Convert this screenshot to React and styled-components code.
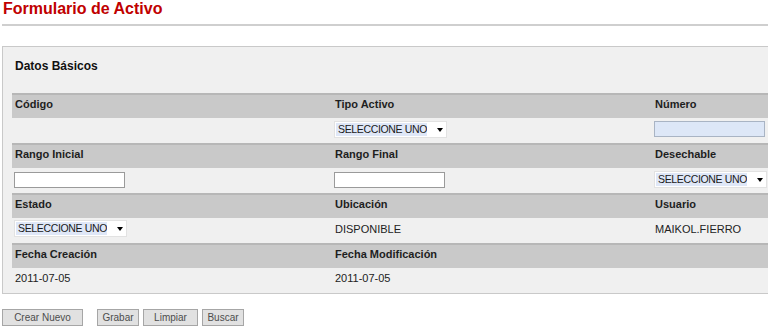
import React from 'react';
import styled, { createGlobalStyle } from 'styled-components';

const GlobalStyle = createGlobalStyle`
    html, body {
        margin: 0;
        padding: 0;
        background: #ffffff;
        overflow: hidden;
    }
    body {
        font-family: "Liberation Sans", Arial, sans-serif;
        color: #222;
    }
`;

const Page = styled.div`
    padding: 0 0 0 2px;
    overflow: hidden;
`;

const Title = styled.h1`
    margin: 0;
    padding-left: 1px;
    font-size: 16px;
    line-height: 18px;
    font-weight: bold;
    color: #c00000;
`;

const Rule = styled.div`
    margin-top: 6px;
    height: 2px;
    background: #cfcfcf;
`;

// panel runs off the right edge of the window, so no right border
const Panel = styled.section`
    margin-top: 20px;
    background: #f0f0f0;
    border: 1px solid #c9c9c9;
    border-right: none;
    padding: 0 0 0 9px;
`;

const SectionTitle = styled.h2`
    margin: 0;
    height: 46px;
    padding: 12px 0 0 3px;
    box-sizing: border-box;
    font-size: 12px;
    line-height: 14px;
    font-weight: bold;
    color: #111;
`;

const Grid = styled.div`
    display: grid;
    grid-template-columns: 320px 320px 1fr;
`;

const HeadCell = styled.div`
    height: 25px;
    box-sizing: border-box;
    background: #c9c9c9;
    border-top: 2px solid #b7b7b7;
    padding: 3px 3px 0;
    font-size: 11px;
    line-height: 13px;
    font-weight: bold;
    color: #1e1e1e;
    white-space: nowrap;
`;

const DataCell = styled.div`
    height: 25px;
    box-sizing: border-box;
    padding: ${p => p.$pad ?? 3}px 2px 0;
    font-size: 11px;
    line-height: 13px;
    color: #222;
`;

const Value = styled.span`
    display: block;
    padding: 0 1px;
    white-space: nowrap;
`;

const TextBox = styled.div`
    width: 111px;
    height: 16px;
    box-sizing: border-box;
    border: 1px solid ${p => (p.$tinted ? '#a9b4c4' : '#9a9a9a')};
    background: ${p => (p.$tinted ? '#dde7f7' : '#ffffff')};
`;

const SelectBox = styled.div`
    width: 113px;
    height: 17px;
    box-sizing: border-box;
    border: 1px solid #e2e2e2;
    background: #ffffff;
    display: flex;
    align-items: center;
    padding: 0 3px 0 1px;
`;

const SelectText = styled.span`
    width: 91px;
    box-sizing: border-box;
    background: #dfe7f7;
    padding: 0 2px;
    font-size: 10.5px;
    line-height: 13px;
    letter-spacing: -0.35px;
    white-space: nowrap;
    overflow: hidden;
    color: #1a1a1a;
    margin-right: 10px;
`;

const Caret = styled.span`
    width: 0;
    height: 0;
    border-left: 3.5px solid transparent;
    border-right: 3.5px solid transparent;
    border-top: 4px solid #000;
`;

const Actions = styled.div`
    margin-top: 15px;
    display: flex;
    align-items: center;
`;

const Button = styled.button`
    width: ${p => p.$w}px;
    height: 17px;
    margin-right: ${p => p.$gap ?? 4}px;
    padding: 0;
    box-sizing: border-box;
    background: #e1e1e1;
    border: 1px solid #a6a6a6;
    border-radius: 0;
    font-family: "Liberation Sans", Arial, sans-serif;
    font-size: 10px;
    line-height: 13px;
    color: #4d4d4d;
`;

const Select = () => (
    <SelectBox>
        <SelectText>SELECCIONE UNO</SelectText>
        <Caret />
    </SelectBox>
);

const App = () => (
    <>
        <GlobalStyle />
        <Page>
            <Title>Formulario de Activo</Title>
            <Rule />
            <Panel>
                <SectionTitle>Datos Básicos</SectionTitle>
                <Grid>
                    <HeadCell>Código</HeadCell>
                    <HeadCell>Tipo Activo</HeadCell>
                    <HeadCell>Número</HeadCell>
                    <DataCell />
                    <DataCell><Select /></DataCell>
                    <DataCell><TextBox $tinted /></DataCell>

                    <HeadCell>Rango Inicial</HeadCell>
                    <HeadCell>Rango Final</HeadCell>
                    <HeadCell>Desechable</HeadCell>
                    <DataCell $pad={4}><TextBox /></DataCell>
                    <DataCell $pad={4}><TextBox /></DataCell>
                    <DataCell><Select /></DataCell>

                    <HeadCell>Estado</HeadCell>
                    <HeadCell>Ubicación</HeadCell>
                    <HeadCell>Usuario</HeadCell>
                    <DataCell $pad={2}><Select /></DataCell>
                    <DataCell $pad={5}><Value>DISPONIBLE</Value></DataCell>
                    <DataCell $pad={5}><Value>MAIKOL.FIERRO</Value></DataCell>

                    <HeadCell>Fecha Creación</HeadCell>
                    <HeadCell>Fecha Modificación</HeadCell>
                    <HeadCell />
                    <DataCell $pad={4}><Value>2011-07-05</Value></DataCell>
                    <DataCell $pad={4}><Value>2011-07-05</Value></DataCell>
                    <DataCell />
                </Grid>
            </Panel>
            <Actions>
                <Button $w={81} $gap={14}>Crear Nuevo</Button>
                <Button $w={42}>Grabar</Button>
                <Button $w={55}>Limpiar</Button>
                <Button $w={42}>Buscar</Button>
            </Actions>
        </Page>
    </>
);

export default App;
